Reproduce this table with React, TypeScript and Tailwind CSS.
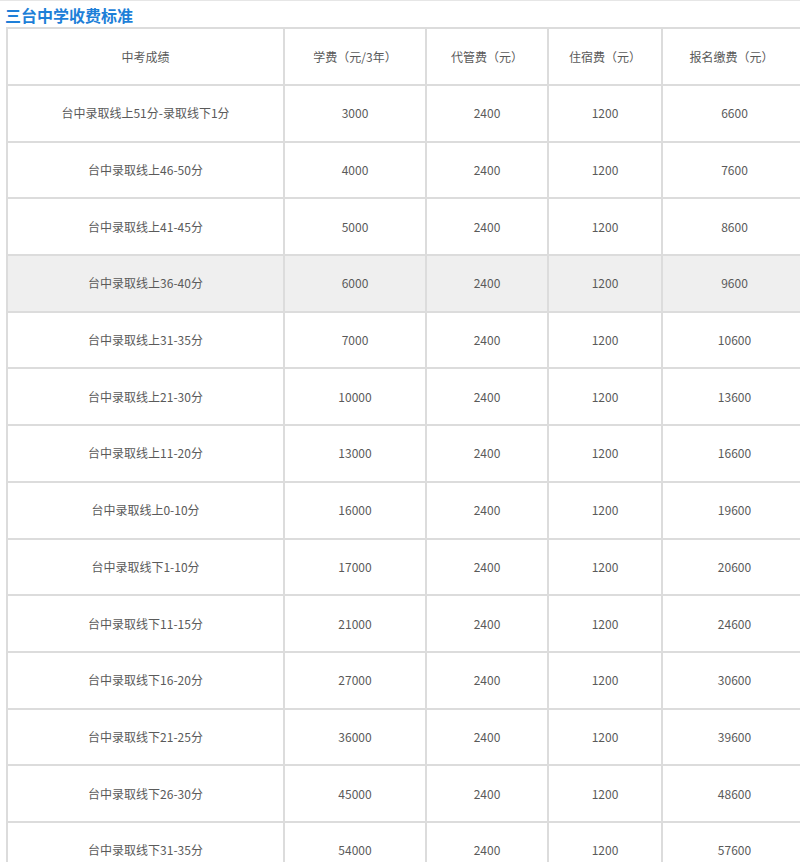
import React from "react";

const rows: [string, string, string, string, string][] = [
  ["台中录取线上51分-录取线下1分", "3000", "2400", "1200", "6600"],
  ["台中录取线上46-50分", "4000", "2400", "1200", "7600"],
  ["台中录取线上41-45分", "5000", "2400", "1200", "8600"],
  ["台中录取线上36-40分", "6000", "2400", "1200", "9600"],
  ["台中录取线上31-35分", "7000", "2400", "1200", "10600"],
  ["台中录取线上21-30分", "10000", "2400", "1200", "13600"],
  ["台中录取线上11-20分", "13000", "2400", "1200", "16600"],
  ["台中录取线上0-10分", "16000", "2400", "1200", "19600"],
  ["台中录取线下1-10分", "17000", "2400", "1200", "20600"],
  ["台中录取线下11-15分", "21000", "2400", "1200", "24600"],
  ["台中录取线下16-20分", "27000", "2400", "1200", "30600"],
  ["台中录取线下21-25分", "36000", "2400", "1200", "39600"],
  ["台中录取线下26-30分", "45000", "2400", "1200", "48600"],
  ["台中录取线下31-35分", "54000", "2400", "1200", "57600"],
];

const headers = ["中考成绩", "学费（元/3年）", "代管费（元）", "住宿费（元）", "报名缴费（元）"];

export default function App() {
  return (
    <div
      className="w-[800px] h-[862px] overflow-hidden bg-white border-t border-[#e6e6e6]"
      style={{ fontFamily: '"Noto Sans CJK SC", "Noto Sans", sans-serif' }}
    >
      <h2 className="pl-[5px] pt-[3px] h-[26px] text-[16px] leading-[22px] font-bold text-[#1e7fd8]">
        三台中学收费标准
      </h2>
      <div className="pl-[6px]">
        <table className="border-collapse table-fixed w-[840px] text-[12px] text-[#5a5a5a]">
          <colgroup>
            <col className="w-[277px]" />
            <col className="w-[142px]" />
            <col className="w-[122px]" />
            <col className="w-[114px]" />
            <col className="w-[185px]" />
          </colgroup>
          <thead>
            <tr className="h-[57px]">
              {headers.map((h, j) => (
                <th
                  key={h}
                  className={
                    j === 4
                      ? "border-2 border-[#dcdcdc] font-normal text-center align-middle p-0 pr-[46px]"
                      : "border-2 border-[#dcdcdc] font-normal text-center align-middle p-0"
                  }
                >
                  {h}
                </th>
              ))}
            </tr>
          </thead>
          <tbody>
            {rows.map((r, i) => (
              <tr key={i} className={i === 3 ? "h-[56.7px] bg-[#efefef]" : "h-[56.7px]"}>
                {r.map((c, j) => (
                  <td
                    key={j}
                    className={
                      j === 4
                        ? "border-2 border-[#dcdcdc] text-center align-middle p-0 pr-[40px]"
                        : "border-2 border-[#dcdcdc] text-center align-middle p-0"
                    }
                  >
                    {c}
                  </td>
                ))}
              </tr>
            ))}
          </tbody>
        </table>
      </div>
    </div>
  );
}
